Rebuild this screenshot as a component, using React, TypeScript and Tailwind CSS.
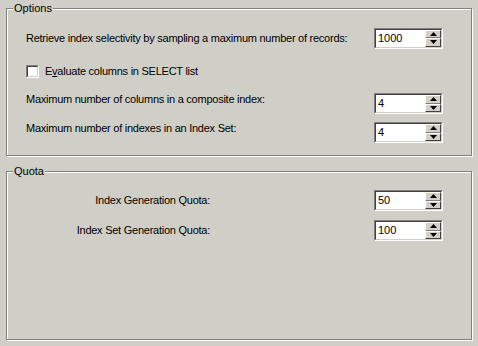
import React from 'react';

const font = { fontFamily: '"Liberation Sans", Arial, sans-serif' };

const Spinner = ({ value }: { value: string }) => (
  <div className="w-[69px] h-[21px] border border-t-[#808080] border-l-[#808080] border-r-white border-b-white shrink-0 tracking-normal">
    <div className="w-full h-full border border-t-[#404040] border-l-[#404040] border-r-[#d4d0c8] border-b-[#d4d0c8] bg-white flex">
      <div className="flex-1 pl-[2px] text-[11px] leading-[17px] text-black">{value}</div>
      <div className="w-[16px] flex flex-col">
        <div className="flex-1 bg-[#d4d0c8] border border-t-white border-l-white border-r-[#404040] border-b-[#808080] flex items-center justify-center">
          <svg width="7" height="4" viewBox="0 0 7 4">
            <path d="M3.5 0 L7 4 L0 4 Z" fill="#000" />
          </svg>
        </div>
        <div className="flex-1 bg-[#d4d0c8] border border-t-white border-l-white border-r-[#404040] border-b-[#404040] flex items-center justify-center">
          <svg width="7" height="4" viewBox="0 0 7 4">
            <path d="M0 0 L7 0 L3.5 4 Z" fill="#000" />
          </svg>
        </div>
      </div>
    </div>
  </div>
);

const Group = ({ title, children }: { title: string; children: React.ReactNode }) => (
  <fieldset className="border border-[#808080] shadow-[inset_1px_1px_0_#fff,1px_1px_0_#fff] m-0 p-0 min-w-0">
    <legend className="ml-[6px] px-[1px] bg-[#cfcfc7] text-[11px] leading-[13px] text-black">{title}</legend>
    {children}
  </fieldset>
);

export default function App() {
  return (
    <div style={font} className="w-[478px] h-[346px] bg-[#cfcfc7] pt-[2px] px-[6px] text-black select-none">
      <Group title="Options">
        <div className="pl-[19px] pr-[28px] pb-[12px] text-[11px] leading-[13px] tracking-[-0.25px]">
          <div className="mt-[12px] h-[22px] flex items-center justify-between">
            <span>Retrieve index selectivity by sampling a maximum number of records:</span>
            <Spinner value="1000" />
          </div>
          <div className="mt-[16px] h-[13px] flex items-center gap-[6px]">
            <div className="w-[13px] h-[13px] border border-t-[#808080] border-l-[#808080] border-r-white border-b-white">
              <div className="w-full h-full bg-white border border-t-[#404040] border-l-[#404040] border-r-[#d4d0c8] border-b-[#d4d0c8]" />
            </div>
            <span>
              E<span className="underline">v</span>aluate columns in SELECT list
            </span>
          </div>
          <div className="mt-[15px] flex items-start justify-between">
            <span>Maximum number of columns in a composite index:</span>
            <Spinner value="4" />
          </div>
          <div className="mt-[8px] flex items-start justify-between">
            <span>Maximum number of indexes in an Index Set:</span>
            <Spinner value="4" />
          </div>
        </div>
      </Group>
      <div className="mt-[9px]">
        <Group title="Quota">
          <div className="pl-[18px] pr-[28px] pb-[98px] text-[11px] leading-[13px] tracking-[-0.25px]">
            <div className="mt-[12px] flex items-center justify-between">
              <span className="w-[185px] text-right">Index Generation Quota:</span>
              <Spinner value="50" />
            </div>
            <div className="mt-[9px] flex items-center justify-between">
              <span className="w-[185px] text-right">Index Set Generation Quota:</span>
              <Spinner value="100" />
            </div>
          </div>
        </Group>
      </div>
    </div>
  );
}
